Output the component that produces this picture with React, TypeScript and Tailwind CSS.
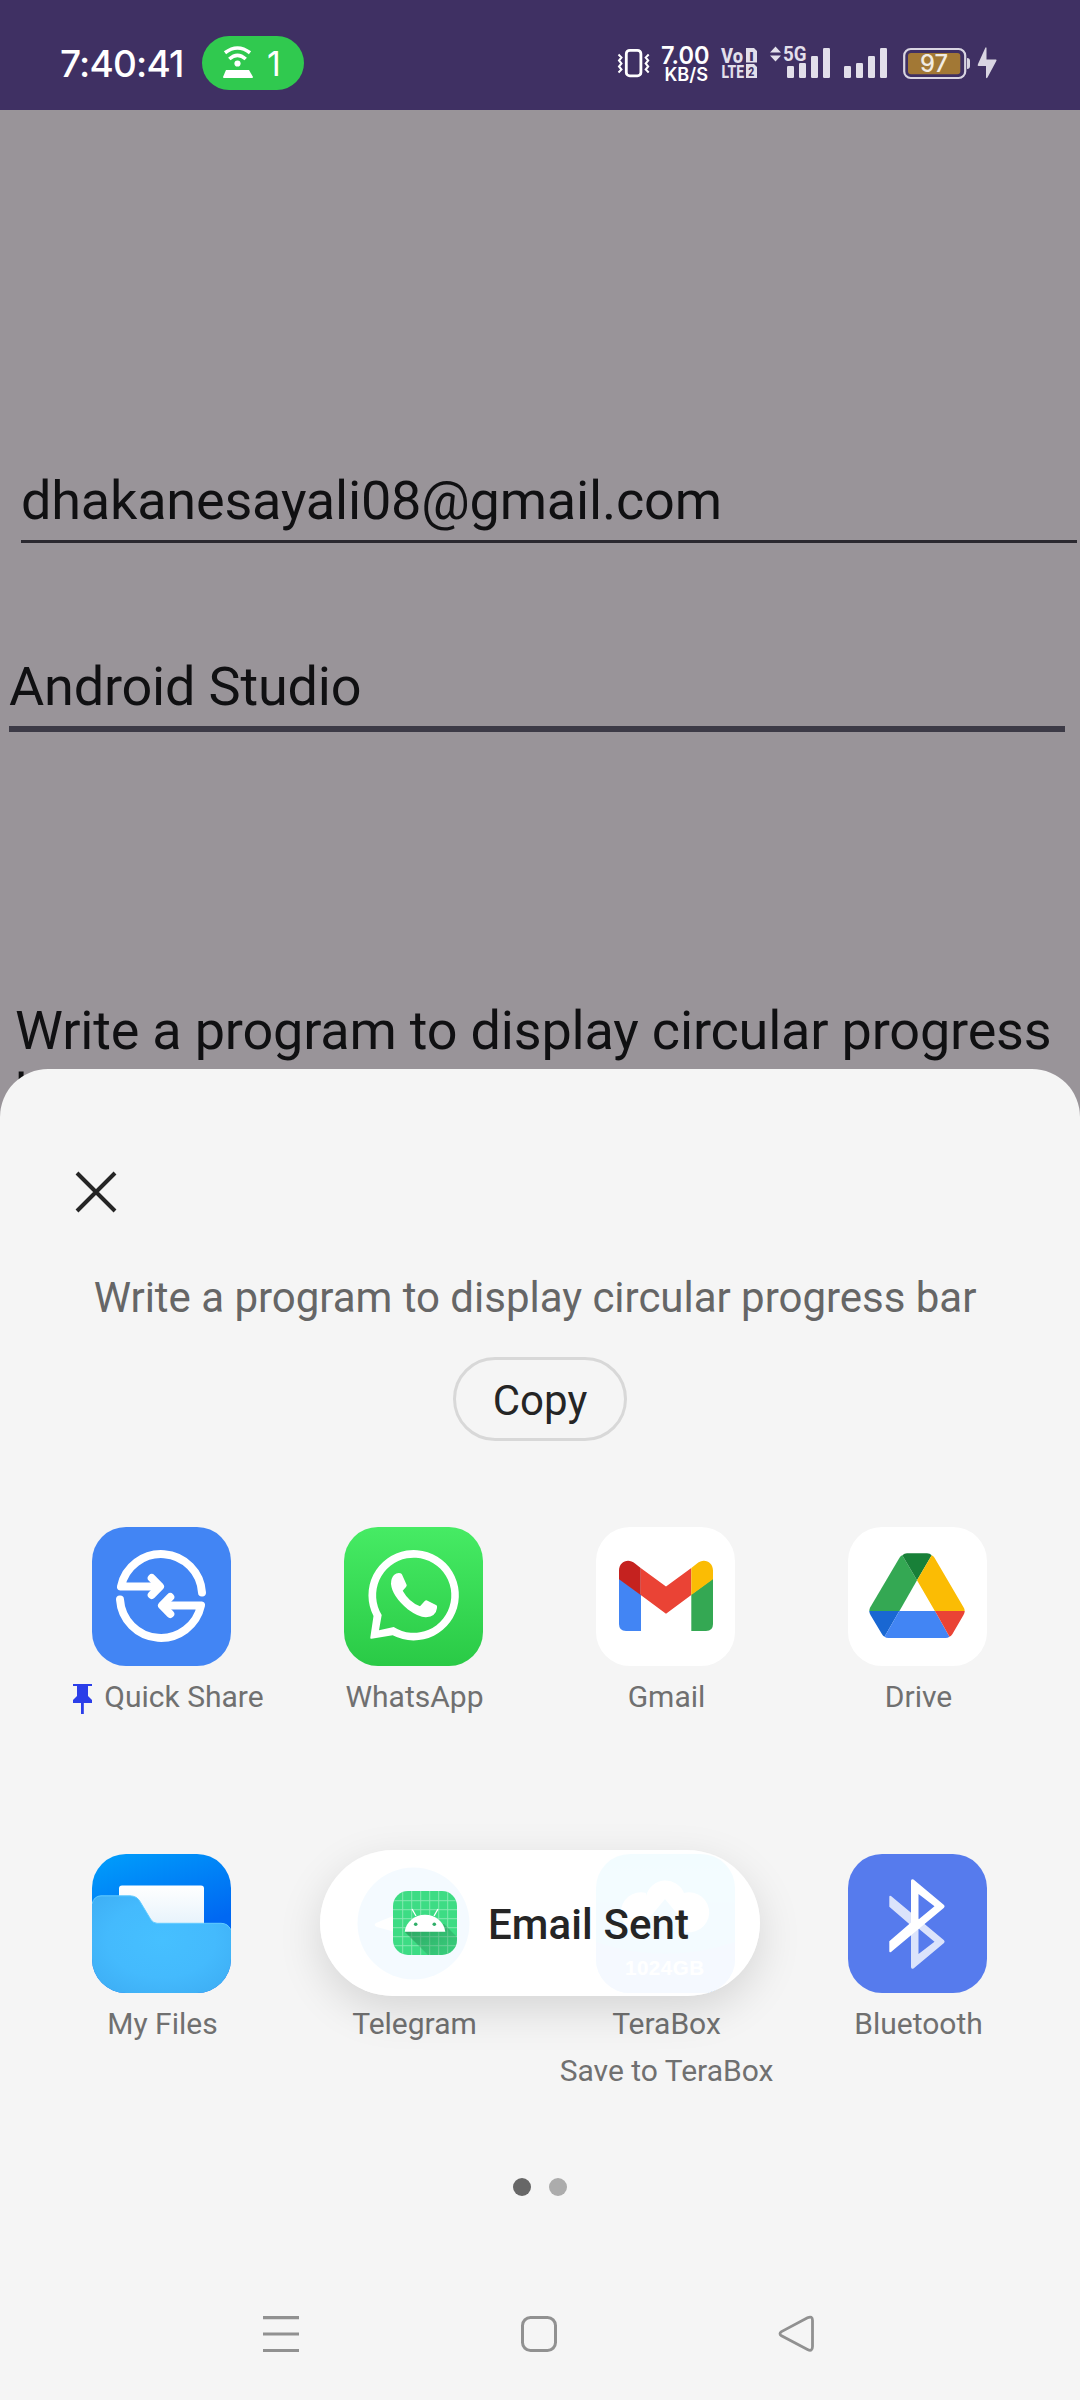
import type { ReactNode } from 'react';

const TILE = 'block h-[139px] w-[139px] overflow-hidden rounded-[34px]';

function StatusBar() {
  return (
    <header className="flex h-[110px] w-full bg-[#3f3063] font-[Inter,sans-serif] text-white *:shrink-0">
      <div className="ml-[60px] mt-[41px] h-[46px] w-[142px] text-[37px] font-medium leading-[46px] tracking-[-0.8px]">
        7:40:41
      </div>
      <div className="mt-9 flex h-[54px] w-[102px] items-center rounded-full bg-[#30c94f]">
        <svg className="ml-[21px]" width="30" height="54" viewBox="216 36 30 54" fill="none">
          <path d="M218 52.8 Q230.5 43.2 243 52.8" stroke="white" strokeWidth="3.6" />
          <path d="M222.3 59 Q230.5 51.6 238.7 59" stroke="white" strokeWidth="3.6" />
          <circle cx="230.5" cy="63.5" r="3.1" fill="white" />
          <path d="M219 70 H242 L246 77 Q246 78 245 78 H217 Q216 78 216 77Z" fill="white" />
        </svg>
        <span className="ml-[14px] mt-px text-[34px] leading-none">1</span>
      </div>
      <svg className="ml-[306px]" width="45" height="110" viewBox="610 0 45 110" fill="none" stroke="white">
        <rect x="626.3" y="50.3" width="14.6" height="25.6" rx="3.5" strokeWidth="2.8" />
        <path d="M618.5 54.5 l3 3 l-2.5 3 l2.5 3 l-2.5 3 l2.5 3 l-3 3 M648.7 54.5 l-3 3 l2.5 3 l-2.5 3 l2.5 3 l-2.5 3 l3 3" strokeWidth="2" />
      </svg>
      <svg width="60" height="110" viewBox="655 0 60 110" fill="white">
        <text x="661" y="64.2" fontSize="24.5" fontWeight="600" textLength="48.5" lengthAdjust="spacingAndGlyphs">7.00</text>
        <text x="664.5" y="81.3" fontSize="18.5" fontWeight="600" textLength="43.5" lengthAdjust="spacingAndGlyphs">KB/S</text>
      </svg>
      <svg width="50" height="110" viewBox="715 0 50 110" fill="#e2dfea">
        <g fontFamily="Roboto, sans-serif" fontWeight="800">
          <text x="721" y="62.5" fontSize="20" textLength="22" lengthAdjust="spacingAndGlyphs">Vo</text>
          <text x="721.5" y="78" fontSize="19" textLength="22.5" lengthAdjust="spacingAndGlyphs">LTE</text>
          <path d="M746 48 H754 L757 51 V62.5 H746Z M746 64 H754 L757 67 V78 H746Z" />
          <text x="749" y="60.5" fontSize="13" textLength="5" lengthAdjust="spacingAndGlyphs" fill="#3f3063">I</text>
          <text x="748.3" y="75.8" fontSize="13" textLength="6" lengthAdjust="spacingAndGlyphs" fill="#3f3063">2</text>
        </g>
      </svg>
      <svg width="72" height="110" viewBox="765 0 72 110" fill="#e2dfea">
        <path d="M775.5 46.5 L781 52.5 H770Z M770 55.5 H781 L775.5 61.5Z" />
        <text x="783" y="61.2" fontFamily="Roboto, sans-serif" fontSize="20" fontWeight="700" textLength="23.5" lengthAdjust="spacingAndGlyphs">5G</text>
        <rect x="787" y="66" width="7" height="12" rx="1.2" />
        <rect x="799" y="63" width="7" height="15" rx="1.2" />
        <rect x="811" y="56" width="7" height="22" rx="1.2" />
        <rect x="823" y="48" width="7" height="30" rx="1.2" />
      </svg>
      <svg width="60" height="110" viewBox="837 0 60 110" fill="#e2dfea">
        <rect x="844" y="66" width="7" height="12" rx="1.2" />
        <rect x="856" y="63" width="7" height="15" rx="1.2" />
        <rect x="868" y="56" width="7" height="22" rx="1.2" />
        <rect x="880" y="48" width="7" height="30" rx="1.2" />
      </svg>
      <svg width="76" height="110" viewBox="897 0 76 110">
        <rect x="904.2" y="49" width="61" height="29" rx="6.5" fill="none" stroke="#d9d5e2" strokeWidth="2.2" />
        <rect x="908" y="53" width="52.3" height="21.3" rx="3" fill="#a27835" />
        <path d="M967 58 Q970 58 970 61 V66 Q970 69 967 69Z" fill="#d9d5e2" />
        <text x="920" y="72.4" fontFamily="Inter, sans-serif" fontSize="24" fontWeight="500" fill="#f1ebe3" textLength="28" lengthAdjust="spacingAndGlyphs">97</text>
      </svg>
      <svg width="30" height="110" viewBox="973 0 30 110" fill="#d9d5e2">
        <path d="M986.5 48 V59.5 H996 Q997 59.5 996.3 61 L987.5 77.5 Q986 79 986 77 V66 H978.5 Q977 66 978 64 L985 48.5 Q986 46.5 986.5 48Z" />
      </svg>
    </header>
  );
}

function QuickShareIcon() {
  return (
    <svg className={TILE} viewBox="0 0 139 139" fill="none">
      <rect width="139" height="139" fill="#4285f4" />
      <g stroke="white" strokeWidth="8" strokeLinecap="round" strokeLinejoin="round">
        <path d="M110 65.5 A41 41 0 0 0 29 59.5 H67" />
        <path d="M59.7 51 L68 59.5 L59.7 68" />
        <path d="M28 72.5 A41 41 0 0 0 109 78.5 H71" />
        <path d="M78.3 87 L70 78.5 L78.3 70" />
      </g>
    </svg>
  );
}

function WhatsAppIcon() {
  return (
    <svg className={TILE} viewBox="0 0 139 139">
      <defs>
        <linearGradient id="wa" x1="0" y1="0" x2="0" y2="1">
          <stop offset="0" stopColor="#46eb64" />
          <stop offset="1" stopColor="#2aca46" />
        </linearGradient>
      </defs>
      <rect width="139" height="139" fill="url(#wa)" />
      <path fill="white" fillRule="evenodd" d="M29.5 89 A45.2 45.2 0 1 1 48.7 108.3 L27.5 111.7 Q26 112 26.3 110.5Z M37.7 88 A37.6 37.6 0 1 1 49.7 100.1 L35 103.3Z" />
      <path fill="white" d="M50 48 Q53 45.5 56.5 46.3 Q57.5 46.5 58 47.5 L62.7 58 Q62.8 59 62 60 L58.7 63.7 Q65 75 76 79.3 L81 73.8 Q82 73 83 73.5 L92.5 78.3 Q93.3 79 93 81 Q92 89.5 82 90.3 Q75 90.5 64 82.5 Q48 69 47 57 Q47 51 50 48Z" />
    </svg>
  );
}

function GmailIcon() {
  return (
    <svg className={TILE} viewBox="0 0 139 139">
      <rect width="139" height="139" fill="white" />
      <path d="M23 51.5 L45 67.5 V104 H30 Q23 104 23 97Z" fill="#4285f4" />
      <path d="M95.3 67.5 L117 51.5 V97 Q117 104 110 104 H95.3Z" fill="#34a853" />
      <path d="M44.7 41 L70 59.5 L95.3 41 V68 L70 86.8 L44.7 68Z" fill="#ea4335" />
      <path d="M23 52.3 V43.5 C23 35 32 30.5 39 36.5 L44.7 41 V68Z" fill="#c5221f" />
      <path d="M117 52.3 V43.5 C117 35 108 30.5 101 36.5 L95.3 41 V68Z" fill="#fbbc04" />
    </svg>
  );
}

function DriveIcon() {
  return (
    <svg className={TILE} viewBox="0 0 139 139">
      <rect width="139" height="139" fill="white" />
      <path d="M54.3 28.3 L69 53.3 L51.3 84.3 H21.3 Q21.3 82 22.3 80.3 L51.5 30.7 Q52.8 28.8 54.3 28.3Z" fill="#34a853" />
      <path d="M54.3 28.3 Q56.5 26.3 59 26.3 H79 Q82 26.3 83.7 28.3 L69 53.3Z" fill="#188038" />
      <path d="M83.7 28.3 Q85.5 29 86.5 30.7 L115.5 80.3 Q116.7 82 116.7 84.3 H87 L69 53.3Z" fill="#fbbc04" />
      <path d="M21.3 84 H51.3 L36.5 109.8 Q35 109 34 107.3 L22.5 88 Q21.3 86 21.3 84Z" fill="#1967d2" />
      <path d="M51.3 84 H87 L101.5 109.8 Q99.8 111 97.5 111 H40.5 Q38 111 36.5 109.8Z" fill="#4285f4" />
      <path d="M87 84 H116.7 Q116.7 86 115.5 88 L104.3 107.3 Q103.2 109 101.5 109.8Z" fill="#ea4335" />
    </svg>
  );
}

function MyFilesIcon() {
  return (
    <svg className={TILE} viewBox="0 0 139 139">
      <defs>
        <linearGradient id="mf-bg" x1="0" y1="0" x2="0.25" y2="0.7">
          <stop offset="0" stopColor="#009ffb" />
          <stop offset="1" stopColor="#0068f2" />
        </linearGradient>
        <linearGradient id="mf-paper" x1="0" y1="0" x2="0" y2="1">
          <stop offset="0" stopColor="#ffffff" />
          <stop offset="1" stopColor="#e3f1fb" />
        </linearGradient>
        <radialGradient id="mf-folder" cx="0.5" cy="0.45" r="0.65">
          <stop offset="0" stopColor="#46c0ff" />
          <stop offset="0.6" stopColor="#44bafd" />
          <stop offset="1" stopColor="#3eaff5" />
        </radialGradient>
      </defs>
      <rect width="139" height="139" fill="url(#mf-bg)" />
      <rect x="27" y="31.5" width="85" height="45" rx="3" fill="url(#mf-paper)" />
      <path d="M0 50 Q2 42 9 41.8 H38 Q45 42 48 47.5 L58.5 65 Q61 69.3 65 69.3 H129 Q136 69.3 139 76 V139 H0Z" fill="url(#mf-folder)" />
      <path d="M0 50 Q2 42 9 41.8 H38 Q45 42 48 47.5 L58.5 65 Q61 69.3 65 69.3 H129 Q136 69.3 139 76" fill="none" stroke="#62cbff" strokeWidth="1" />
    </svg>
  );
}

function TelegramIcon() {
  return (
    <svg className={TILE} viewBox="0 0 139 139">
      <rect width="139" height="139" fill="white" />
      <circle cx="69.5" cy="69.5" r="56" fill="#30a0f0" />
      <path d="M32 69 L98 42 Q103 41 102 47 L91 98 Q89 103 84 100 L51 78 L33 73 Q29 71 32 69Z" fill="white" />
    </svg>
  );
}

function TeraBoxIcon() {
  return (
    <svg className={TILE} viewBox="0 0 139 139">
      <defs>
        <linearGradient id="tb" x1="0" y1="0" x2="0" y2="1">
          <stop offset="0" stopColor="#10c8ff" />
          <stop offset="1" stopColor="#2896ff" />
        </linearGradient>
      </defs>
      <rect width="139" height="139" fill="url(#tb)" />
      <path d="M0 88 Q69 112 139 88 V139 H0Z" fill="#3f8dff" />
      <path d="M50 42 A20 20 0 0 1 88 39 A20 20 0 1 1 86 77 L69 60 L52 77 A20 20 0 1 1 50 39Z" fill="white" />
      <path d="M69 45 L88 68 L69 84 L50 68Z" fill="#14b4ff" />
      <text x="29" y="121" fontFamily="Liberation Sans, sans-serif" fontWeight="700" fontSize="20.5" textLength="79" fill="white">1024GB</text>
    </svg>
  );
}

const BT_HALF =
  'M63 27 Q63 24.5 65.5 25.5 L96 51 Q97.3 52.3 96 53.7 L43 98 Q41.3 99 41.3 97 V87.3 L63 68.5Z M70.5 40 L86.5 52.3 L70.5 65.5Z';

function BluetoothIcon() {
  return (
    <svg className={TILE} viewBox="0 0 139 139">
      <rect width="139" height="139" fill="#567bed" />
      <path d={BT_HALF} transform="translate(0 140) scale(1 -1)" fill="#dbe3fb" fillRule="evenodd" />
      <path d={BT_HALF} fill="white" fillRule="evenodd" />
    </svg>
  );
}

function Pin() {
  return (
    <svg className="mt-[5px] shrink-0" width="19" height="30" viewBox="0 0 19 30" fill="#2b3ee9">
      <path d="M0 0 H19 V2 H15 V12 L19 16 V19 H0 V16 L4 12 V2 H0Z" />
      <rect x="8" y="19" width="2.8" height="11" />
    </svg>
  );
}

type App = { name: string; icon: ReactNode; detail?: string; pinned?: boolean };

const ROWS: App[][] = [
  [
    { name: 'Quick Share', icon: <QuickShareIcon />, pinned: true },
    { name: 'WhatsApp', icon: <WhatsAppIcon /> },
    { name: 'Gmail', icon: <GmailIcon /> },
    { name: 'Drive', icon: <DriveIcon /> },
  ],
  [
    { name: 'My Files', icon: <MyFilesIcon /> },
    { name: 'Telegram', icon: <TelegramIcon /> },
    { name: 'TeraBox', icon: <TeraBoxIcon />, detail: 'Save to TeraBox' },
    { name: 'Bluetooth', icon: <BluetoothIcon /> },
  ],
];

function AppCell({ app }: { app: App }) {
  return (
    <div className="flex flex-col items-center">
      {app.icon}
      <div className={app.pinned ? 'mt-[13px] flex h-[35px] gap-3 pl-[15px]' : 'mt-[13px] flex h-[35px] pl-[3px]'}>
        {app.pinned && <Pin />}
        <span className="whitespace-nowrap">{app.name}</span>
      </div>
      {app.detail && <div className="mt-3 whitespace-nowrap pl-[3px]">{app.detail}</div>}
    </div>
  );
}

function AndroidIcon() {
  return (
    <svg className="block h-16 w-16 overflow-hidden rounded-[15px]" viewBox="0 0 64 64">
      <defs>
        <linearGradient id="an" x1="0" y1="0" x2="1" y2="1">
          <stop offset="0.2" stopColor="#1d7a48" stopOpacity="0.5" />
          <stop offset="1" stopColor="#1d7a48" stopOpacity="0.1" />
        </linearGradient>
      </defs>
      <rect width="64" height="64" fill="#3ddc84" />
      <path d="M9.7 0V64M18.7 0V64M27.7 0V64M36.7 0V64M45.7 0V64M54.7 0V64M0 9.7H64M0 18.7H64M0 27.7H64M0 36.7H64M0 45.7H64M0 54.7H64" stroke="#8ceab5" strokeWidth="0.9" />
      <path d="M11.7 40.7 L35 64 H64 V46 L51 33Z" fill="url(#an)" />
      <path d="M11.7 40.7 A20.4 18.7 0 0 1 52.3 40.7Z" fill="white" />
      <path d="M19 18 L23 25 M45 18 L41 25" stroke="white" strokeWidth="1.3" />
      <circle cx="22.7" cy="33.3" r="1.8" fill="#2fae68" />
      <circle cx="41.3" cy="33.3" r="1.8" fill="#2fae68" />
    </svg>
  );
}

export default function App() {
  return (
    <div className="relative h-[2400px] w-[1080px] overflow-hidden bg-[#999499] font-[Roboto,sans-serif]">
      <StatusBar />
      <main className="h-[959px] pt-[359px] text-[54px] leading-[63px] tracking-[-0.19px] text-[#101012]">
        <div className="ml-[21px] h-[74px] w-[1056px] border-b-[3px] border-[#2b2930]">
          dhakanesayali08@gmail.com
        </div>
        <div className="ml-[9px] mt-[112px] h-[77px] w-[1056px] border-b-[6px] border-[#3c3a46]">
          Android Studio
        </div>
        <p className="ml-[15px] mt-[267px] w-[1060px]">Write a program to display circular progress bar</p>
      </main>

      <section className="relative h-[1331px] rounded-t-[48px] bg-[#f5f5f5] pt-[102px]">
        <svg className="ml-[75px] block" width="42" height="42" viewBox="0 0 42 42" stroke="#252525" strokeWidth="4">
          <path d="M2 2 L40 40 M40 2 L2 40" />
        </svg>
        <p className="mt-[60px] h-[49px] pr-[10px] text-center text-[42px] leading-[49px] tracking-[-0.02px] text-[#666666]">
          Write a program to display circular progress bar
        </p>
        <button className="mx-auto mt-[35px] flex h-[84px] w-[174px] items-center justify-center rounded-full border-[3px] border-[#d8d8d8] pt-[3px] text-[42px] leading-none text-[#252525]">
          Copy
        </button>

        <div className="mt-[86px] text-[30px] leading-[35px] text-[#707070]">
          {ROWS.map((row, i) => (
            <div key={i} className="ml-[35px] grid h-[327px] w-[1008px] grid-cols-[repeat(4,252px)]">
              {row.map((app) => (
                <AppCell key={app.name} app={app} />
              ))}
            </div>
          ))}
        </div>

        <div className="mt-[-3px] flex justify-center gap-[18px]">
          <span className="h-[18px] w-[18px] rounded-full bg-[#676767]" />
          <span className="h-[18px] w-[18px] rounded-full bg-[#acacac]" />
        </div>

        <nav className="ml-[262px] mt-[119px] flex w-[553px] justify-between">
          <svg width="38" height="38" viewBox="0 0 38 38" stroke="#919191" strokeWidth="3.2">
            <path d="M1 2.6 H37 M1 19 H37 M1 35.5 H37" />
          </svg>
          <svg width="38" height="38" viewBox="0 0 38 38" fill="none" stroke="#919191" strokeWidth="3">
            <rect x="2.5" y="2.5" width="33" height="33" rx="8" />
          </svg>
          <svg width="38" height="38" viewBox="0 0 38 38" fill="none" stroke="#919191" strokeWidth="2.8">
            <path d="M30.5 2.8 Q35.5 0.5 35.5 5.5 V31.5 Q35.5 37 30.5 34.5 L4.5 20.8 Q1.5 18.7 4.5 16.6Z" />
          </svg>
        </nav>
      </section>

      <div className="absolute left-[320px] top-[1850px] flex h-[146px] w-[440px] items-center rounded-full bg-white/95 pl-[73px] shadow-[0_14px_44px_rgba(0,0,0,0.13)]">
        <AndroidIcon />
        <span className="ml-[31px] mt-[2px] whitespace-nowrap text-[42px] font-medium leading-[49px] tracking-[0.1px] text-[#252525]">Email Sent</span>
      </div>
    </div>
  );
}
